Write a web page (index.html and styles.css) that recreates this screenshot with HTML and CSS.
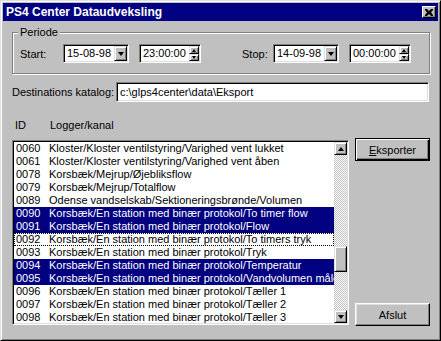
FILE: index.html
```html
<!DOCTYPE html>
<html>
<head>
  <title>PS4 Center Dataudveksling</title>
  <link rel="stylesheet" href="styles.css">
</head>
<body>
  <div class="window">
    <div class="titlebar">
      <span class="title">PS4 Center Dataudveksling</span>
      <span class="close">
        <svg width="8" height="7" viewBox="0 0 8 7"><path d="M0 0h2l2 2 2-2h2v1l-2 2.5 2 2.5v1h-2l-2-2-2 2h-2v-1l2-2.5-2-2.5z" fill="#000"/></svg>
      </span>
    </div>

    <div class="content">
      <fieldset class="group">
        <legend>Periode</legend>
        <div class="period-row">
          <span class="label start-label">Start:</span>
          <div class="combo">
            <span class="field-text">15-08-98</span>
            <span class="drop"><i class="arrow-down"></i></span>
          </div>
          <div class="spin">
            <span class="field-text">23:00:00</span>
            <span class="spin-btns">
              <span class="spin-btn"><i class="tri-up"></i></span>
              <span class="spin-btn"><i class="tri-down"></i></span>
            </span>
          </div>
          <span class="label stop-label">Stop:</span>
          <div class="combo">
            <span class="field-text">14-09-98</span>
            <span class="drop"><i class="arrow-down"></i></span>
          </div>
          <div class="spin">
            <span class="field-text">00:00:00</span>
            <span class="spin-btns">
              <span class="spin-btn"><i class="tri-up"></i></span>
              <span class="spin-btn"><i class="tri-down"></i></span>
            </span>
          </div>
        </div>
      </fieldset>

      <div class="dest-row">
        <span class="label dest-label">Destinations katalog:</span>
        <div class="textbox">c:\glps4center\data\Eksport</div>
      </div>

      <div class="list-header">
        <span class="col-id">ID</span>
        <span>Logger/kanal</span>
      </div>

      <div class="main">
        <div class="listbox">
          <div class="rows" id="rows"></div>
          <div class="scrollbar">
            <span class="sb-btn"><i class="arrow-up"></i></span>
            <div class="sb-track">
              <div class="sb-thumb"></div>
            </div>
            <span class="sb-btn"><i class="arrow-down"></i></span>
          </div>
        </div>
        <div class="buttons">
          <button class="btn default"><u>E</u>ksporter</button>
          <button class="btn">Afslut</button>
        </div>
      </div>
    </div>
  </div>
  <script>
    const rows = [
      { id: '0060', name: 'Kloster/Kloster ventilstyring/Varighed vent lukket' },
      { id: '0061', name: 'Kloster/Kloster ventilstyring/Varighed vent åben' },
      { id: '0078', name: 'Korsbæk/Mejrup/Øjebliksflow' },
      { id: '0079', name: 'Korsbæk/Mejrup/Totalflow' },
      { id: '0089', name: 'Odense vandselskab/Sektioneringsbrønde/Volumen' },
      { id: '0090', name: 'Korsbæk/En station med binær protokol/To timer flow', selected: true },
      { id: '0091', name: 'Korsbæk/En station med binær protokol/Flow', selected: true },
      { id: '0092', name: 'Korsbæk/En station med binær protokol/To timers tryk', focus: true },
      { id: '0093', name: 'Korsbæk/En station med binær protokol/Tryk' },
      { id: '0094', name: 'Korsbæk/En station med binær protokol/Temperatur', selected: true },
      { id: '0095', name: 'Korsbæk/En station med binær protokol/Vandvolumen måler', selected: true },
      { id: '0096', name: 'Korsbæk/En station med binær protokol/Tæller 1' },
      { id: '0097', name: 'Korsbæk/En station med binær protokol/Tæller 2' },
      { id: '0098', name: 'Korsbæk/En station med binær protokol/Tæller 3' }
    ];
    const rowsEl = document.getElementById('rows');
    rows.forEach(row => {
      const div = document.createElement('div');
      div.className = 'row' + (row.selected ? ' selected' : '') + (row.focus ? ' focus' : '');
      div.innerHTML = `<span class="col-id">${row.id}</span><span class="col-name">${row.name}</span>`;
      rowsEl.appendChild(div);
    });
  </script>
</body>
</html>
```

FILE: styles.css
```css
body {
  margin: 0;
  padding: 0;
  background-color: #c0c0c0;
  font-family: "Liberation Sans", Arial, sans-serif;
  font-size: 11px;
  color: #000;
}
.window {
  width: 441px;
  height: 341px;
  box-sizing: border-box;
  border: 1px solid;
  border-color: #dfdfdf #000 #000 #dfdfdf;
  box-shadow: inset 1px 1px #fff, inset -1px -1px #808080;
  padding: 2px;
  background-color: #c0c0c0;
}
.titlebar {
  height: 18px;
  background-color: #000080;
  color: #fff;
  display: flex;
  align-items: center;
  justify-content: space-between;
  padding: 0 2px 0 3px;
}
.title {
  font-weight: bold;
  font-size: 12px;
  white-space: nowrap;
}
.close {
  width: 14px;
  height: 12px;
  box-sizing: border-box;
  background-color: #c0c0c0;
  border: 1px solid;
  border-color: #fff #000 #000 #fff;
  box-shadow: inset -1px -1px #808080;
  display: flex;
  align-items: center;
  justify-content: center;
}

.content {
  padding: 0 8px 0 9px;
}

/* group box */
.group {
  margin: 5px 0 0 0;
  padding: 6px 0 10px 7px;
  border: 1px solid #808080;
  box-shadow: inset 1px 1px #fff, 1px 1px #fff;
  min-width: 0;
}
.group legend {
  padding: 0 2px;
  margin-left: -2px;
  line-height: 12px;
  background-color: #c0c0c0;
}
.period-row {
  display: flex;
  align-items: center;
  height: 19px;
}
.label {
  white-space: nowrap;
}
.start-label {
  width: 43px;
}
.stop-label {
  width: 31px;
  margin-left: 41px;
}

/* sunken fields */
.combo,
.spin,
.textbox {
  box-sizing: border-box;
  height: 19px;
  background-color: #fff;
  border: 1px solid;
  border-color: #808080 #fff #fff #808080;
  box-shadow: inset 1px 1px #000, inset -1px -1px #dfdfdf;
  padding: 1px;
  display: flex;
  align-items: center;
}
.combo {
  width: 66px;
}
.spin {
  width: 62px;
  margin-left: 10px;
}
.field-text {
  flex: 1;
  padding-left: 2px;
  line-height: 15px;
}
.drop,
.spin-btn,
.sb-btn {
  box-sizing: border-box;
  background-color: #c0c0c0;
  border: 1px solid;
  border-color: #dfdfdf #000 #000 #dfdfdf;
  box-shadow: inset 1px 1px #fff, inset -1px -1px #808080;
  display: flex;
  align-items: center;
  justify-content: center;
}
.drop {
  width: 13px;
  height: 15px;
}
.spin-btns {
  display: flex;
  flex-direction: column;
  width: 10px;
  height: 15px;
}
.spin-btn {
  height: 8px;
}
.spin-btn + .spin-btn {
  height: 7px;
}
.arrow-down,
.arrow-up,
.tri-up,
.tri-down {
  display: block;
  width: 0;
  height: 0;
  border-left: 3.5px solid transparent;
  border-right: 3.5px solid transparent;
}
.arrow-down {
  border-top: 4px solid #000;
}
.arrow-up {
  border-bottom: 4px solid #000;
}
.tri-up,
.tri-down {
  border-left-width: 2.5px;
  border-right-width: 2.5px;
}
.tri-up {
  border-bottom: 3px solid #000;
}
.tri-down {
  border-top: 3px solid #000;
}

.dest-row {
  display: flex;
  align-items: center;
  margin-top: 8px;
}
.dest-label {
  width: 104px;
}
.textbox {
  flex: 1;
  height: 20px;
  padding-left: 3px;
  margin-right: 1px;
}

.list-header {
  display: flex;
  line-height: 13px;
  margin-top: 17px;
  padding-left: 3px;
}
.list-header .col-id {
  width: 35px;
}

.main {
  display: flex;
  margin-top: 6px;
}
.listbox {
  width: 338px;
  height: 185px;
  margin-top: 2px;
  box-sizing: border-box;
  background-color: #fff;
  border: 1px solid;
  border-color: #808080 #fff #fff #808080;
  box-shadow: inset 1px 1px #000, inset -1px -1px #dfdfdf;
  padding: 1px;
  display: flex;
  overflow: hidden;
}
.rows {
  flex: 1;
  overflow: hidden;
}
.row {
  display: flex;
  height: 13px;
  line-height: 13px;
  padding-left: 2px;
  white-space: nowrap;
  overflow: hidden;
}
.row .col-id {
  width: 33px;
  flex: none;
}
.row.selected {
  background-color: #000080;
  color: #fff;
}
.row.focus {
  outline: 1px dotted #000;
  outline-offset: -1px;
}
.scrollbar {
  width: 13px;
  display: flex;
  flex-direction: column;
}
.sb-btn {
  height: 13px;
  flex: none;
}
.sb-track {
  flex: 1;
  background: repeating-conic-gradient(#c0c0c0 0 25%, #fff 0 50%) 0 0 / 2px 2px;
}
.sb-thumb {
  margin-top: 91px;
  height: 26px;
  box-sizing: border-box;
  background-color: #c0c0c0;
  border: 1px solid;
  border-color: #dfdfdf #000 #000 #dfdfdf;
  box-shadow: inset 1px 1px #fff, inset -1px -1px #808080;
}

.buttons {
  display: flex;
  flex-direction: column;
  justify-content: space-between;
  margin-left: 6px;
  height: 188px;
}
.btn {
  width: 75px;
  height: 23px;
  box-sizing: border-box;
  font-family: inherit;
  font-size: 11px;
  color: #000;
  background-color: #c0c0c0;
  border: 1px solid;
  border-color: #fff #000 #000 #fff;
  box-shadow: inset -1px -1px #808080, inset 1px 1px #dfdfdf;
  padding: 0;
}
.btn.default {
  border-color: #000;
  box-shadow: inset 1px 1px #fff, inset -1px -1px #000, inset -2px -2px #808080;
}
```
